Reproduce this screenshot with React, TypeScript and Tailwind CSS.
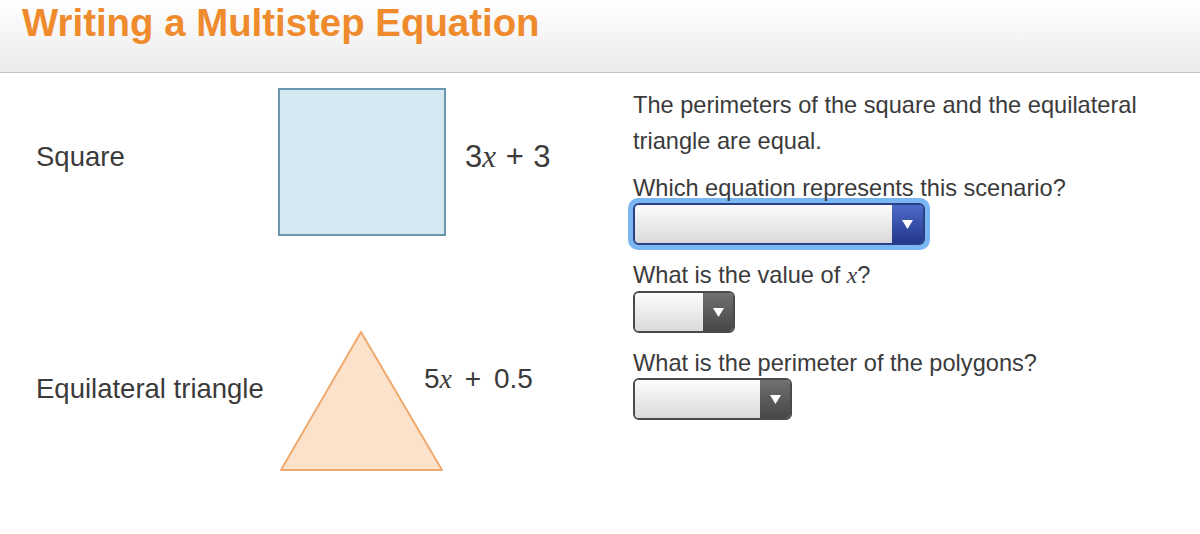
import React from "react";

const sans = { fontFamily: '"Liberation Sans", Arial, sans-serif' };

const Arrow = () => (
  <svg width="11" height="9" viewBox="0 0 11 9">
    <polygon points="0,0 11,0 5.5,9" fill="#ffffff" />
  </svg>
);

type DropProps = {
  width: string;
  active?: boolean;
};

const Dropdown = ({ width, active }: DropProps) => {
  if (active) {
    return (
      <div className="rounded-[10px] bg-[#7ab6f2] p-[5px] -ml-[5px] w-fit">
        <div className={`${width} h-[42px] flex rounded-[6px] border-2 border-[#2b3f86] overflow-hidden`}>
          <div className="flex-1 bg-gradient-to-b from-[#fdfdfd] to-[#d9d9d9]" />
          <div className="w-[31px] flex items-center justify-center bg-gradient-to-b from-[#4d6bcb] to-[#24388a]">
            <Arrow />
          </div>
        </div>
      </div>
    );
  }
  return (
    <div className={`${width} h-[42px] flex rounded-[6px] border-2 border-[#4a4a4a] overflow-hidden`}>
      <div className="flex-1 bg-gradient-to-b from-[#fdfdfd] to-[#dadada]" />
      <div className="w-[30px] flex items-center justify-center bg-gradient-to-b from-[#707070] to-[#474747]">
        <Arrow />
      </div>
    </div>
  );
};

const X = () => (
  <span className="italic" style={{ fontFamily: '"Liberation Serif", "Times New Roman", serif' }}>
    x
  </span>
);

export default function App() {
  return (
    <div className="w-[1200px] h-[534px] bg-white text-[#3b3b3b] overflow-hidden" style={sans}>
      <header className="h-[73px] border-b border-[#c4c4c4] bg-gradient-to-b from-white to-[#ebebeb] pl-[22px] pt-[4px]">
        <h1 className="text-[38.4px] leading-[38px] font-bold text-[#ef8b2c]">Writing a Multistep Equation</h1>
      </header>

      <main className="flex">
        <section className="w-[633px] pl-[36px]">
          <div className="flex items-start mt-[15px]">
            <div className="w-[242px] mt-[53px] text-[27.5px] leading-[32px]">Square</div>
            <div className="w-[168px] h-[148px] border-2 border-[#6a97ad] bg-[#d3e8f0]" />
            <div className="ml-[19px] mt-[52px] text-[31px] leading-[34px] whitespace-nowrap">
              3<X /> <span className="mx-[1px]">+</span> 3
            </div>
          </div>

          <div className="flex items-start mt-[94px]">
            <div className="w-[243px] mt-[43px] text-[27.5px] leading-[32px]">Equilateral triangle</div>
            <svg width="165" height="142" viewBox="0 0 165 142" className="shrink-0">
              <polygon points="2,140 163,140 82,2" fill="#fde2cb" stroke="#efaa6f" strokeWidth="2" strokeLinejoin="round" />
            </svg>
            <div className="-ml-[20px] mt-[33px] text-[28px] leading-[32px] whitespace-nowrap">
              5<X /> <span className="mx-[5px]">+</span> 0.5
            </div>
          </div>
        </section>

        <section className="pt-[14px] text-[23.6px]">
          <p className="leading-[36px] w-[540px]">
            The perimeters of the square and the equilateral triangle are equal.
          </p>
          <div className="mt-[16px] leading-[26px]">Which equation represents this scenario?</div>
          <div className="-mt-[3px]">
            <Dropdown width="w-[292px]" active />
          </div>

          <div className="mt-[12px] leading-[26px]">
            What is the value of <X />?
          </div>
          <div className="mt-[3px]">
            <Dropdown width="w-[102px]" />
          </div>

          <div className="mt-[17px] leading-[26px]">What is the perimeter of the polygons?</div>
          <div className="mt-[2px]">
            <Dropdown width="w-[159px]" />
          </div>
        </section>
      </main>
    </div>
  );
}
